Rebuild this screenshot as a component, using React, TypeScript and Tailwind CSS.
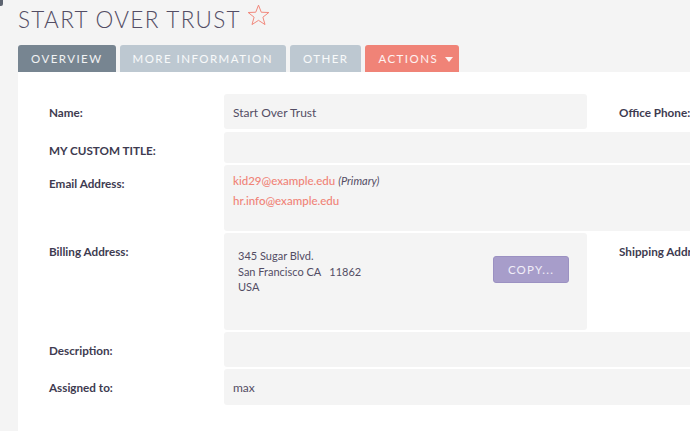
import React from 'react'

const font = { fontFamily: 'Lato, "Open Sans", sans-serif' }

function Star() {
  return (
    <svg width="23" height="22" viewBox="0 0 24 23" className="ml-[6px] mt-[-2px]">
      <polygon
        points="12,1.2 14.9,8.6 22.8,8.9 16.6,13.8 18.8,21.5 12,17.1 5.2,21.5 7.4,13.8 1.2,8.9 9.1,8.6"
        fill="none"
        stroke="#f08377"
        strokeWidth="1"
        strokeLinejoin="miter"
      />
    </svg>
  )
}

function Tab({ label, active, accent, caret }: { label: string; active?: boolean; accent?: boolean; caret?: boolean }) {
  const bg = active ? 'bg-[#778591]' : accent ? 'bg-[#f08377]' : 'bg-[#bdc8d1]'
  return (
    <div
      className={`h-[27px] pl-[13px] ${caret ? 'pr-[6px]' : 'pr-[13px]'} rounded-t-[3px] flex items-center text-[11.5px] tracking-[1.45px] text-white/90 ${bg}`}
    >
      {label}
      {caret && <span className="ml-[7px] mt-[1px] border-x-[4px] border-x-transparent border-t-[5px] border-t-white/90" />}
    </div>
  )
}

function Label({ children, className = '' }: { children: React.ReactNode; className?: string }) {
  return <div className={`pt-[9px] text-[11.7px] leading-[18px] font-bold text-[#3e3b50] whitespace-nowrap ${className}`}>{children}</div>
}

export default function App() {
  return (
    <div className="w-[690px] h-[431px] overflow-hidden bg-[#f4f4f4] relative" style={font}>
      <div className="absolute left-0 top-0 w-[3px] h-[6px] bg-[#5d6470] rounded-br-[2px]" />
      {/* Title */}
      <div className="pl-[18px] pt-[6px] flex items-start h-[45px]">
        <h1 className="text-[22.5px] leading-[28px] font-light tracking-[1.3px] text-[#534d64]">START OVER TRUST</h1>
        <Star />
      </div>

      {/* Tabs */}
      <div className="pl-[18px] flex gap-[4px]">
        <Tab label="OVERVIEW" active />
        <Tab label="MORE INFORMATION" />
        <Tab label="OTHER" />
        <Tab label="ACTIONS" accent caret />
      </div>

      {/* Panel */}
      <div className="ml-[18px] w-[1000px] h-[400px] bg-white pt-[22px] pl-[31px] flex flex-col gap-[2px]">
        <div className="flex">
          <Label className="w-[175px]">Name:</Label>
          <div className="w-[363px] h-[35px] mb-[1px] bg-[#f4f4f4] rounded-[3px] pl-[9px] pt-[10px] text-[12px] leading-[18px] text-[#534d64]">
            Start Over Trust
          </div>
          <Label className="ml-[32px]">Office Phone:</Label>
        </div>

        <div className="flex">
          <Label className="w-[175px]">MY CUSTOM TITLE:</Label>
          <div className="flex-1 h-[31px] bg-[#f4f4f4] rounded-[3px]" />
        </div>

        <div className="flex">
          <Label className="w-[175px]">Email Address:</Label>
          <div className="flex-1 h-[66px] bg-[#f4f4f4] rounded-[3px] pl-[9px] pt-[6px] text-[11.5px] leading-[20px]">
            <div>
              <span className="text-[#f08377] font-medium">kid29@example.edu</span>{' '}
              <span className="italic text-[11px] text-[#534d64]">(Primary)</span>
            </div>
            <div className="text-[#f08377] font-medium">hr.info@example.edu</div>
          </div>
        </div>

        <div className="flex">
          <Label className="w-[175px]">Billing Address:</Label>
          <div className="w-[363px] h-[97px] bg-[#f4f4f4] rounded-[3px] pl-[14px] pt-[15px] pr-[18px] flex justify-between items-start">
            <div className="text-[11px] leading-[15.5px] text-[#534d64]">
              <div>345 Sugar Blvd.</div>
              <div>San Francisco CA&nbsp;&nbsp; 11862</div>
              <div>USA</div>
            </div>
            <button className="mt-[8px] w-[76px] h-[27px] rounded-[3px] bg-[#a79dca] border border-[#9b91c2] text-[11.5px] tracking-[1.2px] text-[#f1eef8]">
              COPY...
            </button>
          </div>
          <Label className="ml-[32px]">Shipping Address:</Label>
        </div>

        <div className="flex">
          <Label className="w-[175px]">Description:</Label>
          <div className="flex-1 h-[35px] bg-[#f4f4f4] rounded-[3px]" />
        </div>

        <div className="flex">
          <Label className="w-[175px]">Assigned to:</Label>
          <div className="flex-1 h-[36px] bg-[#f4f4f4] rounded-[3px] pl-[9px] pt-[10px] text-[12px] leading-[18px] text-[#534d64]">
            max
          </div>
        </div>
      </div>
    </div>
  )
}
